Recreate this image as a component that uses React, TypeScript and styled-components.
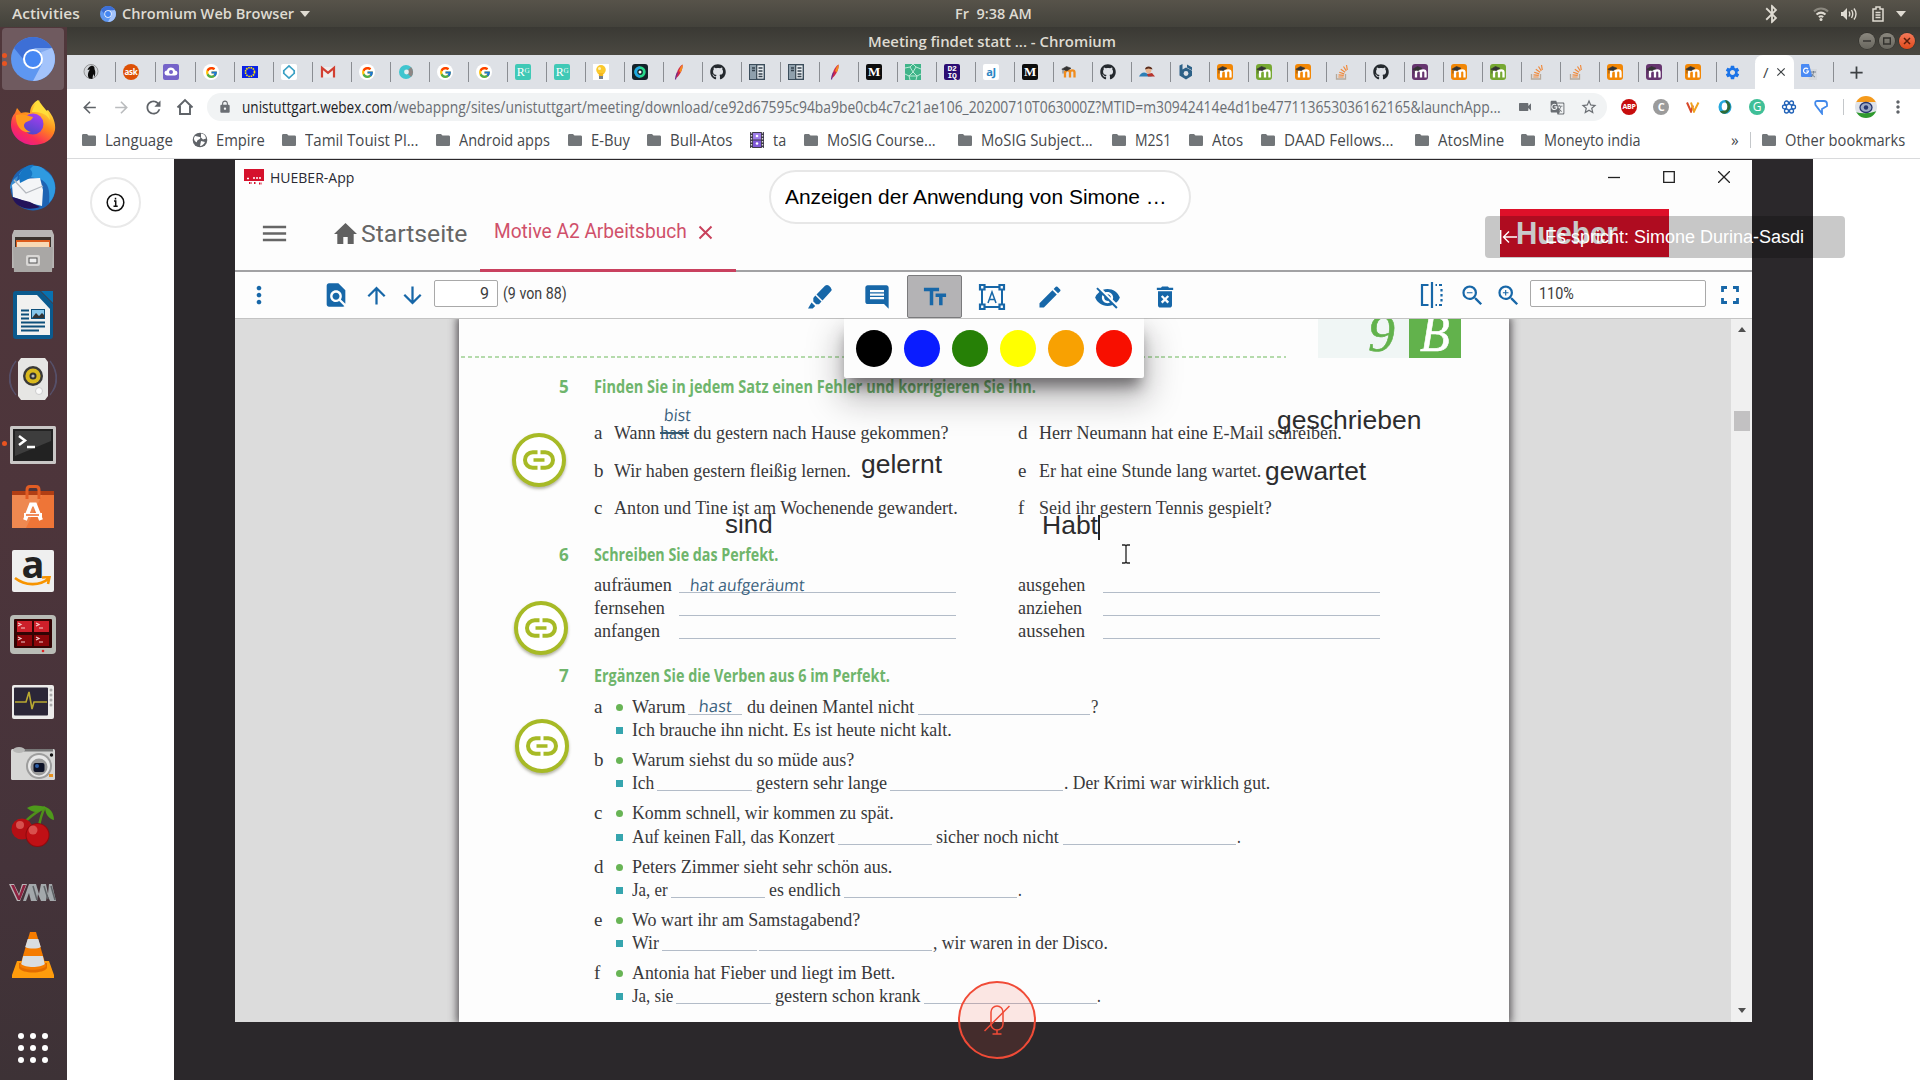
import React, { useLayoutEffect, useRef, useState } from "react";
import styled, { createGlobalStyle } from "styled-components";
import {
  MdMoreVert, MdFindInPage, MdArrowUpward, MdArrowDownward, MdComment, MdTextFields, MdEdit,
  MdVisibilityOff, MdDeleteForever, MdZoomIn, MdZoomOut, MdMenu, MdClose, MdLock, MdVideocam,
  MdStarBorder, MdArrowBack, MdArrowForward, MdRefresh, MdBluetooth, MdSettings, MdAdd, MdGTranslate,
} from "react-icons/md";
import { FaGithub } from "react-icons/fa";
import { FcGoogle } from "react-icons/fc";

const UI = `"Open Sans", "Noto Sans", sans-serif`;
const SERIF = `"Liberation Serif", serif`;
const SANS = `"Liberation Sans", Arial, sans-serif`;
const BLUE = "#1767a8";

const Global = createGlobalStyle`
  * { box-sizing: border-box; }
  body { margin: 0; background: #fff; overflow: hidden; }
  svg { display: block; flex: none; }
`;

/* ---------- text that condenses or widens to a given width ---------- */

const FitBox = styled.span<{ $w: number }>`
  display: inline-block;
  flex: none;
  width: ${(p) => p.$w}px;
  white-space: pre;
`;
const FitInner = styled.span`
  display: inline-block;
  transform-origin: 0 50%;
`;

function Fit({ w, children }: { w: number; children: React.ReactNode }) {
  const ref = useRef<HTMLSpanElement>(null);
  const [scale, setScale] = useState(1);
  useLayoutEffect(() => {
    if (ref.current) setScale(w / ref.current.offsetWidth);
  }, [w]);
  return (
    <FitBox $w={w}>
      <FitInner ref={ref} style={{ transform: `scaleX(${scale})` }}>{children}</FitInner>
    </FitBox>
  );
}

/* ---------- desktop shell ---------- */

const Desktop = styled.div`
  width: 1920px;
  height: 1080px;
  display: flex;
  flex-direction: column;
  overflow: hidden;
  font-family: ${UI};
`;
const TopBar = styled.header`
  height: 27px;
  flex: none;
  display: grid;
  grid-template-columns: 955px 1fr 170px;
  align-items: center;
  background: linear-gradient(#57534a, #43423b);
  color: #dfdbd2;
  font-size: 15px;
  font-weight: 600;
  line-height: 25px;
`;
const TopLeft = styled.div`
  display: flex;
  align-items: center;
  padding-left: 12px;
`;
const AppMenu = styled.div`
  display: flex;
  align-items: center;
  gap: 6px;
  margin-left: 20px;
`;
const TopRight = styled.div`
  display: flex;
  align-items: center;
  padding-left: 11px;
`;
const Tray = styled.div<{ $l?: number }>`
  margin-left: ${(p) => p.$l ?? 0}px;
`;
const Caret = styled.i`
  border: 5px solid transparent;
  border-top: 6px solid #dfdbd2;
  border-bottom: 0;
`;
const Body = styled.div`
  flex: 1;
  display: flex;
  min-height: 0;
`;
const Dock = styled.nav`
  width: 67px;
  flex: none;
  display: flex;
  flex-direction: column;
  background: linear-gradient(#50373b 0%, #4d353b 45%, #45333a 80%, #3d3236 100%);
`;
const DockItem = styled.div<{ $active?: boolean; $drop?: number }>`
  height: 62px;
  width: 62px;
  margin: 1px 2px;
  padding-top: ${(p) => (p.$drop ?? 0) * 2}px;
  border-radius: 4px;
  flex: none;
  display: flex;
  align-items: center;
  justify-content: center;
  position: relative;
  background: ${(p) => (p.$active ? "#6f5a5f" : "transparent")};
`;
const Dots = styled.div`
  position: absolute;
  left: 0;
  top: 0;
  height: 100%;
  display: flex;
  flex-direction: column;
  justify-content: center;
  gap: 3px;
  i { width: 5px; height: 5px; border-radius: 50%; background: #e95420; }
`;
const DockSpacer = styled.div`flex: 1;`;
const AppsGrid = styled.div`
  display: grid;
  grid-template-columns: repeat(3, 6px);
  gap: 6px;
  margin: 0 auto 17px 18px;
  i { width: 6px; height: 6px; border-radius: 50%; background: #fff; }
`;
const Browser = styled.div`
  flex: 1;
  min-width: 0;
  display: flex;
  flex-direction: column;
`;
const TitleBar = styled.div`
  height: 28px;
  flex: none;
  display: flex;
  align-items: center;
  padding-left: 801px;
  background: linear-gradient(#3a3934, #4a4841);
  color: #dfdbd2;
  font-size: 15px;
  font-weight: 600;
  line-height: 26px;
`;
const WinButtons = styled.div`
  margin-left: auto;
  margin-right: 5px;
  display: flex;
  gap: 4px;
`;
const WinButton = styled.span<{ $close?: boolean }>`
  width: 16px;
  height: 16px;
  border-radius: 50%;
  display: flex;
  align-items: center;
  justify-content: center;
  background: ${(p) => (p.$close ? "linear-gradient(#f4795a,#df4a1b)" : "linear-gradient(#8b887f,#68665e)")};
  box-shadow: 0 0 0 0.5px #2c2b27;
`;

/* ---------- browser chrome ---------- */

const TabStrip = styled.div`
  height: 34px;
  flex: none;
  display: flex;
  align-items: center;
  background: #dee1e6;
`;
const Tab = styled.div<{ $w: number; $pad?: number }>`
  width: ${(p) => p.$w}px;
  height: 20px;
  flex: none;
  display: flex;
  align-items: center;
  padding-left: ${(p) => p.$pad ?? 7}px;
  border-right: 1px solid #8a8d92;
`;
const ActiveTab = styled.div`
  width: 39px;
  height: 34px;
  margin-left: -1px;
  margin-right: 1px;
  background: #fff;
  border-radius: 8px 8px 0 0;
  display: flex;
  align-items: center;
  padding-left: 8px;
  gap: 5px;
  font-size: 15px;
  color: #3c4043;
`;
const NewTab = styled.div`
  width: 44px;
  display: flex;
  justify-content: center;
  color: #3c4043;
`;
const Toolbar = styled.div`
  height: 36px;
  flex: none;
  display: flex;
  align-items: center;
  background: #fff;
  color: #5f6368;
  padding: 0 6px;
`;
const NavIcon = styled.div<{ $dim?: boolean }>`
  width: 32px;
  flex: none;
  display: flex;
  justify-content: center;
  color: ${(p) => (p.$dim ? "#babcbe" : "#5f6368")};
`;
const Omnibox = styled.div`
  width: 1400px;
  height: 28px;
  flex: none;
  margin: 0 6px;
  border-radius: 14px;
  background: #f1f3f4;
  display: flex;
  align-items: center;
  padding-left: 10px;
  font-size: 15.5px;
  line-height: 27px;
  color: #6a6e73;
  b { font-weight: 400; color: #202124; }
`;
const OmniIcon = styled.div<{ $w: number; $l?: number }>`
  width: ${(p) => p.$w}px;
  flex: none;
  margin-left: ${(p) => p.$l ?? 0}px;
  display: flex;
  justify-content: center;
`;
const VLine = styled.i<{ $h: number; $r?: number }>`
  width: 1px;
  height: ${(p) => p.$h}px;
  margin-right: ${(p) => p.$r ?? 0}px;
  background: #c4c7ca;
`;
const Bookmarks = styled.div`
  height: 34px;
  flex: none;
  display: flex;
  align-items: center;
  background: #fff;
  border-bottom: 1px solid #d9dadc;
  padding: 0 0 4px 15px;
  font-size: 15.5px;
  line-height: 22px;
  color: #45484c;
`;
const Bookmark = styled.div<{ $w: number; $gap?: number }>`
  width: ${(p) => p.$w}px;
  flex: none;
  display: flex;
  align-items: center;
  gap: ${(p) => p.$gap ?? 9}px;
`;
const More = styled.span`
  flex: none;
  margin-left: 90px;
  width: 19px;
`;

/* ---------- meeting page ---------- */

const Meeting = styled.main`
  flex: 1;
  display: flex;
  background: #fff;
  position: relative;
`;
const Side = styled.div`
  width: 107px;
  flex: none;
  padding: 18px 0 0 23px;
`;
const InfoButton = styled.div`
  width: 51px;
  height: 51px;
  border-radius: 50%;
  border: 2px solid #e9e9e9;
  display: flex;
  align-items: center;
  justify-content: center;
`;
const Stage = styled.div`
  width: 1639px;
  background: #2b282b;
  padding: 1px 61px 0;
`;
const Share = styled.div`
  width: 1517px;
  height: 862px;
  background: #fdfdfd;
  display: flex;
  flex-direction: column;
  overflow: hidden;
`;
const ShareTitle = styled.div`
  height: 36px;
  flex: none;
  display: flex;
  align-items: center;
  padding: 0 22px 2px 9px;
  font: 15px/34px ${UI};
  color: #2a2a33;
  > svg { margin-right: 6px; }
`;
const Controls = styled.div`
  margin-left: auto;
  display: flex;
  gap: 43px;
`;
const AppHeader = styled.div`
  height: 76px;
  flex: none;
  display: flex;
  border-bottom: 2px solid #a2a2a4;
  font-family: Roboto, sans-serif;
  color: #666;
`;
const MenuCell = styled.div`
  width: 93px;
  padding: 22px 0 0 24px;
`;
const HomeTab = styled.div`
  width: 152px;
  padding: 20px 0 0 6px;
  display: flex;
  align-items: flex-start;
  gap: 4px;
  font-size: 24.5px;
  line-height: 35px;
  svg { margin-top: 7px; }
`;
const BookTab = styled.div`
  width: 256px;
  height: 76px;
  padding: 23px 0 0 14px;
  display: flex;
  gap: 11px;
  border-bottom: 3px solid #c9415f;
  color: #d0506a;
  font-size: 19.5px;
  line-height: 26px;
  svg { margin-top: 6px; }
`;
const Logo = styled.div`
  width: 169px;
  height: 48px;
  margin: 13px 0 0 764px;
  padding-left: 16px;
  background: #de1029;
  color: #fff;
  font: bold 31px/50px ${SANS};
`;
const Tools = styled.div`
  height: 47px;
  flex: none;
  display: flex;
  align-items: center;
  border-bottom: 1px solid #c3c3c3;
  color: ${BLUE};
  position: relative;
  z-index: 2;
  background: #fdfdfd;
  font: 16px/27px Roboto, sans-serif;
`;
const Tool = styled.div<{ $w: number; $l?: number; $on?: boolean; $edit?: boolean }>`
  width: ${(p) => p.$w}px;
  margin-left: ${(p) => p.$l ?? 0}px;
  margin-top: ${(p) => (p.$edit ? 2 : 0)}px;
  padding-top: ${(p) => (p.$edit ? 2 : 0)}px;
  height: 43px;
  flex: none;
  display: flex;
  align-items: center;
  justify-content: center;
  border: ${(p) => (p.$on ? "1px solid #7a7a7c" : "0")};
  border-radius: 2px;
  background: ${(p) => (p.$on ? "#b4b3b5" : "transparent")};
`;
const Field = styled.div<{ $w: number; $l?: number; $right?: boolean }>`
  width: ${(p) => p.$w}px;
  height: 27px;
  margin-left: ${(p) => p.$l ?? 0}px;
  margin-bottom: 4px;
  flex: none;
  border: 1px solid #a9a9a9;
  border-radius: 2px;
  background: #fff;
  color: #3c3c3c;
  padding: 0 8px;
  line-height: 25px;
  text-align: ${(p) => (p.$right ? "right" : "left")};
`;
const PageCount = styled.div`
  width: 292px;
  flex: none;
  margin-left: 5px;
  padding-bottom: 4px;
  color: #3c3c3c;
`;
const Palette = styled.div`
  position: absolute;
  left: 609px;
  top: 46px;
  width: 300px;
  height: 60px;
  padding: 11px 12px 0;
  display: flex;
  gap: 12px;
  background: #fdfdfd;
  border-top: 1px solid #c3c3c3;
  border-radius: 0 0 2px 2px;
  clip-path: inset(0 -60px -60px -60px);
  box-shadow: 0 12px 14px -4px rgba(20, 16, 20, 0.5), 0 18px 34px 4px rgba(20, 16, 20, 0.26);
`;
const Swatch = styled.i<{ $c: string }>`
  width: 36px;
  height: 37px;
  border-radius: 50%;
  background: ${(p) => p.$c};
`;
const Viewer = styled.div`
  flex: 1;
  min-height: 0;
  display: flex;
  background: #dcdcdc;
  padding-left: 224px;
`;
const Sheet = styled.article`
  width: 1050px;
  height: 703px;
  flex: none;
  position: relative;
  background: #fdfdfd;
  box-shadow: 0 0 8px 2px rgba(40, 36, 40, 0.75);
  clip-path: inset(0 -12px 0 -12px);
  font: 19px/23px ${SERIF};
  color: #38383a;
`;
const Scroll = styled.div`
  width: 21px;
  margin-left: auto;
  background: #f0f0f0;
  display: flex;
  flex-direction: column;
  align-items: center;
  padding: 4px 0 5px;
`;
const Thumb = styled.i`
  width: 16px;
  height: 20px;
  margin-top: 79px;
  background: #c2c1c2;
`;
const Arrow = styled.i<{ $down?: boolean }>`
  border: 4px solid transparent;
  ${(p) => (p.$down ? "border-top: 5px solid #505050; margin-top: auto;" : "border-bottom: 5px solid #505050;")}
`;
const Banner = styled.div`
  height: 38px;
  display: flex;
  padding-left: 2px;
`;
const DashRule = styled.div`
  width: 825px;
  height: 39px;
  background: repeating-linear-gradient(90deg, #b5dbac 0 4px, transparent 4px 6.8px) 0 100% / 100% 2px no-repeat;
`;
const Chapter = styled.div<{ $fill: string; $ink: string; $w: number; $pad: number; $ml?: number }>`
  width: ${(p) => p.$w}px;
  margin-left: ${(p) => p.$ml ?? 0}px;
  padding-left: ${(p) => p.$pad}px;
  height: 39px;
  overflow: hidden;
  background: ${(p) => p.$fill};
  color: ${(p) => p.$ink};
  font: italic 52px/29px ${SERIF};
  -webkit-text-stroke: 0.6px ${(p) => p.$ink};
`;
const Heading = styled.h2<{ $mt: number }>`
  margin: ${(p) => p.$mt}px 0 0;
  height: 24px;
  padding-left: 100px;
  display: flex;
  font: bold 17px/26px ${UI};
  color: #6fb56c;
`;
const Num = styled.span`width: 35px;`;
const Row = styled.div<{ $mt?: number }>`
  height: 23px;
  margin-top: ${(p) => p.$mt ?? 0}px;
  padding-left: 135px;
  display: flex;
  align-items: flex-start;
`;
const Mark = styled.span<{ $w: number }>`
  width: ${(p) => p.$w}px;
  flex: none;
`;
const Half = styled.div`
  width: 424px;
  flex: none;
  display: flex;
`;
const Struck = styled.s`
  color: #33586f;
  text-decoration-thickness: 2px;
`;
const Blank = styled.span<{ $w: number; $l?: number; $r?: number }>`
  width: ${(p) => p.$w}px;
  flex: none;
  margin: 0 ${(p) => p.$r ?? 4}px 0 ${(p) => p.$l ?? 3.5}px;
  height: 20px;
  display: flex;
  justify-content: center;
  border-bottom: 1px solid #b3bcc8;
`;
const Hand = styled.span`
  display: inline-block;
  font: 16.5px/21px ${UI};
  color: #3b627e;
  transform: skewX(-5deg);
`;
const Bullet = styled.i<{ $sq?: boolean }>`
  width: 7px;
  height: 7px;
  margin: 9px 9px 0 0;
  flex: none;
  border-radius: ${(p) => (p.$sq ? 0 : "50%")};
  background: ${(p) => (p.$sq ? "#36a5ae" : "#68b455")};
`;
const Note = styled.div<{ $x: number; $y: number }>`
  position: absolute;
  left: ${(p) => p.$x}px;
  top: ${(p) => p.$y}px;
  font: 26.5px/30px ${SANS};
  color: #2c2c2e;
`;
const Pinned = styled.div<{ $x: number; $y: number }>`
  position: absolute;
  left: ${(p) => p.$x}px;
  top: ${(p) => p.$y}px;
`;
const LinkBadge = styled(Pinned)`
  width: 54px;
  height: 54px;
  border: 4px solid #a7ba26;
  border-radius: 50%;
  background: #fff;
  display: flex;
  align-items: center;
  justify-content: center;
  box-shadow: 0 2px 3px rgba(90, 90, 60, 0.45);
`;
const TextCaret = styled(Pinned)`
  width: 1.5px;
  height: 25px;
  background: #222;
`;
const Pill = styled.div`
  position: absolute;
  left: 702px;
  top: 11px;
  width: 422px;
  height: 54px;
  border: 2px solid #e7e7e7;
  border-radius: 27px;
  background: #fff;
  padding-left: 14px;
  font: 20px/50px ${SANS};
  color: #000;
`;
const Speaker = styled.div`
  position: absolute;
  left: 1418px;
  top: 57px;
  width: 360px;
  height: 42px;
  border-radius: 4px;
  background: rgba(0, 0, 0, 0.21);
  color: #fff;
  display: flex;
  align-items: center;
  gap: 28px;
  padding-left: 15px;
  font: 18px/42px ${SANS};
`;
const MicButton = styled.div`
  position: absolute;
  left: 891px;
  top: 822px;
  width: 78px;
  height: 78px;
  border-radius: 50%;
  border: 2px solid #f04b37;
  background: rgba(240, 75, 55, 0.13);
  display: flex;
  align-items: center;
  justify-content: center;
`;

/* ---------- favicons ---------- */

const FavBox = styled.span<{ $bg: string; $c?: string; $f?: string; $round?: boolean }>`
  width: 16px;
  height: 16px;
  flex: none;
  display: flex;
  align-items: center;
  justify-content: center;
  overflow: hidden;
  border-radius: ${(p) => (p.$round ? "50%" : "2px")};
  background: ${(p) => p.$bg};
  color: ${(p) => p.$c ?? "#fff"};
  font: ${(p) => p.$f ?? `bold 9px/16px ${UI}`};
  letter-spacing: -0.3px;
`;
const WhiteDisc = styled.span`
  width: 16px;
  height: 16px;
  border-radius: 50%;
  background: #fff;
  display: flex;
  align-items: center;
  justify-content: center;
`;

const Moodle = ({ c }: { c: string }) => (
  <svg width="16" height="16" viewBox="0 0 16 16">
    {c !== "none" && <rect width="16" height="16" rx="3" fill={c} />}
    <path d="M4 13.500V7M4.500 8.500c0-2.800 4.500-2.800 4.500 0v5M9 8.500c0-2.800 4.500-2.800 4.500 0v5" fill="none" stroke={c === "none" ? "#f08c1e" : "#fff"} strokeWidth="2.300" />
    <path d="M.8 5.200 5.500 2.500l4.500 1.700-4 2.600zM2 5.500v4" fill="#333" stroke="#333" strokeWidth=".6" />
  </svg>
);
const Stack = () => (
  <svg width="16" height="16" viewBox="0 0 16 16" fill="none">
    <path d="M2.500 10v5h9v-5" stroke="#b5a99c" strokeWidth="1.300" />
    <path d="M4.300 13h5.400M4.500 10.800l5.300.6M5.200 8.200l5 1.700M6.800 5.200l4.300 3.100M9.500 2.500l2.800 4.300M12.500 1l.8 5" stroke="#f08a3c" strokeWidth="1.200" />
  </svg>
);
const Feather = () => (
  <svg width="16" height="16" viewBox="0 0 16 16">
    <path d="M5 14C5 9 7.500 3 11.500.5 12.200 4 9.500 10 6.500 13z" fill="#d0284a" />
    <path d="M8 7C9 4 10 2 11.500.5 12.200 3 11 6 9.800 8.500z" fill="#f58a1f" />
    <path d="M4.500 15.500c.3-3 1-5 2-7" stroke="#6d2a86" fill="none" strokeWidth="1.200" />
  </svg>
);
const BookIcon = () => (
  <svg width="16" height="16" viewBox="0 0 16 16">
    <rect x=".7" y=".7" width="14.600" height="14.600" fill="#e8edf0" stroke="#3c4e5c" strokeWidth="1.400" />
    <path d="M1 1h6.500v14H1z" fill="#8fa0ac" />
    <path d="M3 4h3M3 6.500h3M9.500 4h4M9.500 7h4M9.500 10h4M9.500 12.500h4" stroke="#34424d" strokeWidth="1.500" />
    <path d="M7.700 1v14" stroke="#34424d" strokeWidth="1.200" />
  </svg>
);
const G = () => <WhiteDisc><FcGoogle size={13} /></WhiteDisc>;
const Hub = () => <FaGithub size={16} color="#24292e" />;
const RG = () => <FavBox $bg="#40c9b6" $f={`12px/16px ${SERIF}`}>Rᴳ</FavBox>;
const M = () => <FavBox $bg="#0d0d0d" $f={`bold 13px/16px ${SERIF}`}>M</FavBox>;

const Penguin = () => (
  <svg width="16" height="16" viewBox="0 0 16 16">
    <circle cx="8" cy="7.500" r="7" fill="#d3d6da" stroke="#777" strokeWidth=".7" />
    <path d="M8 2c2-1 4 1 3.500 3C13 8 12 11 11.500 13l-1.300-3-.8 5-3.200-.6C4 12 5 8 7 5.500L4.500 6C5 4 6.500 2.500 8 2z" fill="#0b0b0b" />
  </svg>
);
const CloudFav = () => (
  <svg width="16" height="16" viewBox="0 0 16 16">
    <rect width="16" height="16" rx="2" fill="#7563c9" />
    <path d="M4 11.500a2.500 2.500 0 0 1 0-5C4.500 2.500 11 2.500 12 6.500a2.500 2.500 0 0 1 0 5z" fill="#fff" />
    <circle cx="8" cy="8" r="2" fill="#7563c9" />
  </svg>
);
const EU = () => (
  <svg width="16" height="16" viewBox="0 0 16 16">
    <rect y="2" width="16" height="12" fill="#0a22e6" />
    <circle cx="8" cy="8" r="4.500" fill="none" stroke="#ffe800" strokeWidth="1.700" strokeDasharray="1.500 .86" />
  </svg>
);
const Diamond = () => (
  <svg width="16" height="16" viewBox="0 0 16 16">
    <rect width="16" height="16" rx="2" fill="#fff" />
    <path d="M3 6.500 8 1.800l5 4.700M3 9.500l5 4.700 5-4.700M2.800 6v4M13.200 6v4" fill="none" stroke="#3aa0c4" strokeWidth="1.700" />
  </svg>
);
const Gmail = () => (
  <svg width="16" height="16" viewBox="0 0 16 16">
    <path d="M1 3h14v10.500H1z" fill="#eee" />
    <path d="M2 13.500V3.800l6 5 6-5v9.700" fill="none" stroke="#d23f31" strokeWidth="2.200" />
  </svg>
);
const CDisc = () => (
  <svg width="16" height="16" viewBox="0 0 16 16">
    <circle cx="8" cy="8" r="7" fill="#3fc5cf" />
    <path d="M8 8 13 3a7 7 0 0 1 0 10z" fill="#8d8684" />
    <circle cx="8.500" cy="8" r="2.400" fill="#e4eef0" />
  </svg>
);
const Bulb = () => (
  <svg width="16" height="16" viewBox="0 0 16 16">
    <rect width="16" height="16" fill="#fff" />
    <circle cx="8" cy="5.800" r="4.800" fill="#fbc92c" />
    <path d="M5.800 9h4.400v3H5.800z" fill="#f4b61e" />
    <path d="M6 12h4v3H6z" fill="#77808a" />
    <circle cx="6.500" cy="4.500" r="1.500" fill="#fff3b8" />
  </svg>
);
const Ring = () => (
  <svg width="16" height="16" viewBox="0 0 16 16">
    <rect width="16" height="16" rx="3" fill="#14212a" />
    <circle cx="8" cy="8" r="4.300" fill="none" stroke="#27d98b" strokeWidth="2.800" />
    <path d="M8 3.700a4.300 4.300 0 0 0 0 8.600" fill="none" stroke="#22a7e6" strokeWidth="2.800" />
    <circle cx="8" cy="8" r="1.500" fill="#fff" />
  </svg>
);
const Mesh = () => (
  <svg width="16" height="16" viewBox="0 0 16 16">
    <rect width="16" height="16" fill="#3fb489" />
    <path d="M0 4l5-1 3 5-4 4-4-2M5 3l3-3 3 3 5 2M11 3 8 8l4 4 4-2M4 12l1 4M12 12l-1 4M4 12h8" fill="none" stroke="#c8efdf" strokeWidth=".9" />
  </svg>
);
const Guy = () => (
  <svg width="16" height="16" viewBox="0 0 16 16">
    <path d="M0 12.500c2-4 5-5 8-3l5 3z" fill="#2d7fb5" />
    <circle cx="9.500" cy="6.500" r="2.800" fill="#e9b48e" />
    <path d="M6 5.500c0-4 7-4 7.500 0l-4-1z" fill="#5b2c1b" />
    <path d="M8 10l5-1 3 3.500H9z" fill="#b8342c" />
  </svg>
);
const HexB = () => (
  <svg width="16" height="16" viewBox="0 0 16 16">
    <path d="M1.500 1.500 4.500 0v5.500L8 3.500l6 3.300v5L8 15.500l-6.500-4z" fill="#2d6187" />
    <circle cx="8" cy="9.500" r="2.400" fill="#dee1e6" />
    <path d="M9 .5l5 2.800v3L9 3.500z" fill="#2d6187" />
  </svg>
);
const Translate = () => (
  <svg width="16" height="16" viewBox="0 0 16 16">
    <path d="M6 5h10v11H8z" fill="#d5d8dc" />
    <path d="M1 0h7l3.500 13H1q-1 0-1-1V1q0-1 1-1z" fill="#4a8af4" />
    <path d="M7 5.200A2.500 2.500 0 1 0 7.500 7H5.200" fill="none" stroke="#fff" strokeWidth="1.200" />
    <path d="M10 8h5M12.500 7v1c0 2-1 3.500-2.500 5M11 10c.5 1.300 1.500 2.300 3 3" fill="none" stroke="#6d7a8a" strokeWidth=".9" />
  </svg>
);

const tabs: React.ReactNode[] = [
  <Penguin />, <FavBox $bg="#dd5005" $round $f={`bold 8px/16px ${UI}`}>ask</FavBox>, <CloudFav />, <G />, <EU />,
  <Diamond />, <Gmail />, <G />, <CDisc />, <G />, <G />, <RG />, <RG />, <Bulb />, <Ring />,
  <Feather />, <Hub />, <BookIcon />, <BookIcon />, <Feather />, <M />, <Mesh />,
  <FavBox $bg="#2c0d73" $f={`bold 8px/7.5px "Liberation Mono", monospace`}>D2<br />IQ</FavBox>,
  <FavBox $bg="#fff" $c="#2a86c4" $f={`bold 11px/14px ${UI}`}>aJ</FavBox>, <M />, <Moodle c="none" />, <Hub />,
  <Guy />, <HexB />, <Moodle c="#f28705" />, <Moodle c="#76a832" />, <Moodle c="#f28705" />, <Stack />, <Hub />,
  <Moodle c="#66356f" />, <Moodle c="#f28705" />, <Moodle c="#76a832" />, <Stack />, <Stack />,
  <Moodle c="#f28705" />, <Moodle c="#66356f" />, <Moodle c="#f28705" />, <MdSettings size={17} color="#1a73e8" />,
];

/* ---------- dock icons ---------- */

const Chromium = ({ s }: { s: number }) => (
  <svg width={s} height={s} viewBox="0 0 44 44">
    <circle cx="22" cy="22" r="22" fill="#5e97f1" />
    <path d="M3 11A22 22 0 0 1 41 11L22 12 12 22z" fill="#3d6fd6" />
    <path d="M41 11A22 22 0 0 1 22 44L31 27 30 11z" fill="#a3c3fb" />
    <path d="M22 11h19l-10 4z" fill="#82a9ee" />
    <circle cx="22" cy="22" r="10" fill="#fff" />
    <circle cx="22" cy="22" r="8" fill="#4587f3" />
  </svg>
);
const Firefox = () => (
  <svg width="46" height="48" viewBox="0 0 46 48">
    <defs>
      <linearGradient id="fx" x1=".8" y1="0" x2=".2" y2="1"><stop offset=".1" stopColor="#ffe83f" /><stop offset=".45" stopColor="#ff8a1c" /><stop offset=".75" stopColor="#fb2e57" /><stop offset="1" stopColor="#e3159a" /></linearGradient>
      <linearGradient id="fxg" x1=".7" y1="0" x2=".3" y2="1"><stop offset="0" stopColor="#a73df0" /><stop offset="1" stopColor="#4a48c8" /></linearGradient>
    </defs>
    <path d="M7 9l4 5c3-1 6-1 9 0 0-6 4-11 8-13 1 5 5 7 8 11l2-1c5 6 8 13 7 20-2 10-11 15-22 15S1 37 1 26c0-5 1-9 4-12z" fill="url(#fx)" />
    <circle cx="23" cy="25" r="10.500" fill="url(#fxg)" />
    <path d="M6 16c7-2 11 1 17 2-1 4-6 4-8 6-3 3 1 8 6 9-9 2-16-6-15-17z" fill="#ff9a1f" />
    <path d="M22 13c2-7 5-10 7-12 1 5 10 10 11 20-4-7-10-8-18-8z" fill="#ffde3a" />
  </svg>
);
const Thunderbird = () => (
  <svg width="48" height="48" viewBox="0 0 48 48">
    <circle cx="24" cy="25" r="22.500" fill="#1d63b3" />
    <path d="M10 12C14 2 30-1 37 8c10 6 13 22 3 32 1-12 0-20-9-24z" fill="#2f9ae0" />
    <path d="M1 26c0-6 3-10 8-13l-2 8z" fill="#3c8fd2" />
    <path d="M3 22l8-6 20-1 3 12-1 16-12-3-17-6z" fill="#f4f5f7" />
    <path d="M5 17l12 13 17-7" fill="none" stroke="#b4b8be" strokeWidth="1.200" />
    <path d="M3 34c8 2 13 4 18 5l10 5c-12 4-24 1-28-10z" fill="#23135a" />
    <path d="M10 14C13 5 19 1 25 2l-4 4c3 3 3 6 0 9l-10 5z" fill="#1676c4" />
  </svg>
);
const Files = () => (
  <svg width="42" height="44" viewBox="0 0 42 44">
    <path d="M2 1h38l2 5v33H0V6z" fill="#b8b6b4" />
    <path d="M3 8h36v11H3z" fill="#3a332e" />
    <path d="M4 11h34v8H4z" fill="#dc5c1c" /><path d="M5 13h32v5H5z" fill="#f8d9b4" />
    <path d="M1 18h40l-1 25H2z" fill="#a9a7a5" />
    <rect x="14" y="26" width="14" height="11" rx="2" fill="#d9d7d5" />
    <rect x="17" y="29" width="8" height="5" fill="#eee" stroke="#555" />
  </svg>
);
const Writer = () => (
  <svg width="40" height="48" viewBox="0 0 40 48">
    <path d="M3 0h24l13 13v32a3 3 0 0 1-3 3H3a3 3 0 0 1-3-3V3a3 3 0 0 1 3-3z" fill="#0b5a8e" />
    <path d="M28 0h12v12z" fill="#0971b0" />
    <path d="M4 4h20l13 14v26H4z" fill="#f1f1f0" />
    <path d="M8 19.500h8M8 23.500h8M8 27.500h8M8 31.500h24M8 35.500h24M8 39.500h18" stroke="#0d4f7a" strokeWidth="2" />
    <path d="M18 18h14v10H18z" fill="#0d4f7a" /><path d="M19 19h12v8H19z" fill="#86c6ea" /><path d="M19 27l4-5 3 3 3-3 2 2v3z" fill="#333" />
  </svg>
);
const Rhythm = () => (
  <svg width="48" height="44" viewBox="0 0 48 44">
    <path d="M7 4C-1 14-1 28 7 38M41 4c8 10 8 24 0 34M4 8C-1 18-1 26 4 34M44 8c5 10 5 18 0 26" fill="none" stroke="#5a5a7a" strokeWidth="1.300" opacity=".75" />
    <path d="M12 1h24l3 4v34l-3 4H12l-3-4V5z" fill="#e6e6e4" />
    <circle cx="24" cy="19" r="10" fill="#3a3a38" /><circle cx="24" cy="19" r="7.600" fill="#d9b91e" />
    <circle cx="24" cy="19" r="3.500" fill="#333" /><circle cx="24" cy="19" r="1.600" fill="#bbb" />
    <circle cx="30" cy="34" r="3.500" fill="#fafafa" stroke="#ccc" />
  </svg>
);
const Terminal = () => (
  <svg width="46" height="38" viewBox="0 0 46 38">
    <rect width="46" height="38" rx="1.500" fill="#c9c7c6" /><rect x="3" y="3" width="40" height="32" fill="#222" />
    <path d="M5 5h36v10L5 30z" fill="#3d3d3d" /><path d="M9 10l6 4.500L9 19" fill="none" stroke="#fff" strokeWidth="2.500" /><path d="M17 21h8" stroke="#fff" strokeWidth="2.500" />
  </svg>
);
const Software = () => (
  <svg width="42" height="44" viewBox="0 0 42 44">
    <path d="M0 6h42v8H0z" fill="#b03e14" /><path d="M0 10h42v33H0z" fill="#ee7537" /><path d="M0 10h30L14 43H0z" fill="#ee8850" />
    <path d="M15 14V5q0-3.500 3-3.500h6q3 0 3 3.500v9" fill="none" stroke="#e25d24" strokeWidth="3" />
    <path d="M13 35 19 19.500h4L29 35M12 30h18" fill="none" stroke="#fff" strokeWidth="4" /><path d="M14 30h13" stroke="#ee6a2a" strokeWidth="1.500" />
  </svg>
);
const AmazonTile = styled.div`
  width: 42px;
  height: 42px;
  border-radius: 2px;
  background: #efefef;
  display: flex;
  flex-direction: column;
  align-items: center;
  font: bold 38px/26px ${UI};
  color: #222;
`;
const Amazon = () => (
  <AmazonTile>
    a
    <svg width="38" height="11" viewBox="0 0 38 11"><path d="M1 2c10 8 25 8 33 1M28 1.500l7.500-.5L34 8" fill="none" stroke="#f79400" strokeWidth="2.600" /></svg>
  </AmazonTile>
);
const Terminator = () => (
  <svg width="46" height="40" viewBox="0 0 46 40">
    <rect width="46" height="39" rx="4" fill="#b9bcb6" /><rect x="4" y="4" width="38" height="29" rx="1" fill="#320404" />
    <path d="M7 6h15v11H7zM24 6h15v11H24z" fill="#cd1f2a" /><path d="M7 20h15v11H7zM24 20h15v11H24z" fill="#8c0509" />
    <path d="M8 8l3 1.500L8 11M26 8l3 1.500-3 1.500M8 22l3 1.500L8 25M26 22l3 1.500-3 1.500M11 13h4M29 13h4M11 27h4M29 27h4" fill="none" stroke="#f3cccc" strokeWidth="1.200" />
    <circle cx="33" cy="36" r="1.300" fill="#d22" />
  </svg>
);
const Monitor = () => (
  <svg width="42" height="34" viewBox="0 0 42 34">
    <rect width="42" height="34" rx="2" fill="#ecebea" /><rect x="2" y="2.500" width="34" height="28" rx="1" fill="#2b2637" />
    <path d="M3 17h11l3-10 3 17 2-7h13" fill="none" stroke="#b9a932" strokeWidth="1.600" />
    <g fill="#aaa"><circle cx="39" cy="5" r="1.500" /><circle cx="39" cy="10" r="1.500" /><circle cx="39" cy="15" r="1.500" /><circle cx="39" cy="20" r="1.500" /></g>
  </svg>
);
const Camera = () => (
  <svg width="44" height="34" viewBox="0 0 44 34">
    <rect y="2" width="44" height="31" rx="1.500" fill="#d6d6d5" /><path d="M13 2h29v2.500H13z" fill="#777" /><ellipse cx="8" cy="3" rx="6" ry="3" fill="#b7b7b6" />
    <circle cx="28" cy="19" r="13" fill="#9d9d9d" /><circle cx="28" cy="19" r="11" fill="#e8e8e8" /><circle cx="28" cy="20" r="8.500" fill="#999" />
    <rect x="22.500" y="16" width="11" height="9" rx="2" fill="#0d1226" /><circle cx="26" cy="19" r="2" fill="#2c5ea6" />
    <circle cx="40.500" cy="8" r="1.700" fill="#111" /><path d="M38 27h4v3h-4z" fill="#e8901e" />
  </svg>
);
const Cherries = () => (
  <svg width="44" height="44" viewBox="0 0 44 44">
    <path d="M14 17C20 10 26 7 34 2M28 22c1-8 3-14 6-20" fill="none" stroke="#4f8f1a" strokeWidth="2.500" />
    <path d="M16 3c7-4 13-2 19-1-6 6-12 7-19 1zM34 2c5 1 9 6 9 13-5-1-9-6-9-13z" fill="#4e9a1b" />
    <circle cx="11" cy="24" r="10.500" fill="#b50f14" /><circle cx="26.500" cy="30" r="12" fill="#8f0a0e" /><circle cx="26.500" cy="30" r="11" fill="#c01015" />
    <circle cx="9" cy="20" r="4" fill="#d6514e" /><circle cx="22" cy="25" r="4.500" fill="#d9504d" />
  </svg>
);
const VMM = () => (
  <svg width="48" height="18" viewBox="0 0 48 18">
    <path d="M0 0h5l5 10 3-10h5l-7 17H8z" fill="#b9b4b6" /><path d="M2 1h3l5 11 4-11h3l-6 15H9z" fill="#8d2240" />
    <path d="M14 17 20 0h7l3 10 2-10h5l2 10 1-10h3l4 17h-6l-3-7-1 7h-5l-3-7-1 7h-6l-2-8-3 8z" fill="#a3a8ab" />
    <path d="M24 2l4 14M35 2l4 13M42 2l4 14" stroke="#5d6265" strokeWidth="1.500" />
  </svg>
);
const VLC = () => (
  <svg width="42" height="46" viewBox="0 0 42 46">
    <path d="M5 29h32l5 14v3H0v-3z" fill="#ff9c0c" /><path d="M7 36c3 6 25 6 28 0v-5H7z" fill="#e26c00" />
    <path d="M18 0h6l10 34c-4 5-22 5-26 0z" fill="#f57c00" />
    <path d="M15.700 7h10.600l2.500 8c-3 2-12 2-15.600 0zM11.200 24h19.600l2 8c-4 4-20 4-23.600 0z" fill="#d9dde0" />
  </svg>
);

const dock: { icon: React.ReactNode; dots?: number; drop?: number }[] = [
  { icon: <Chromium s={44} />, dots: 2 }, { icon: <Firefox /> }, { icon: <Thunderbird /> },
  { icon: <Files /> }, { icon: <Writer /> }, { icon: <Rhythm /> }, { icon: <Terminal />, dots: 1, drop: 2 },
  { icon: <Software /> }, { icon: <Amazon /> }, { icon: <Terminator /> }, { icon: <Monitor />, drop: 3 },
  { icon: <Camera />, drop: 1 }, { icon: <Cherries /> }, { icon: <VMM />, drop: 2 }, { icon: <VLC /> },
];

/* ---------- small glyphs ---------- */

const Folder = () => (
  <svg width="14" height="12" viewBox="0 0 14 12"><path d="M0 1.500C0 .5.500 0 1.500 0H5l1.500 1.500h6c1 0 1.500.5 1.500 1.500v7.500c0 1-.5 1.500-1.500 1.500h-11C.5 12 0 11.500 0 10.500z" fill="#727679" /></svg>
);
const Globe = () => (
  <svg width="16" height="16" viewBox="0 0 16 16"><circle cx="8" cy="8" r="7.300" fill="#5f6368" /><path d="M3 4c2 0 3 1 5 1 1 1 0 2-2 3s0 3-2 2-2-3-2-4zM9 1.500c3 0 5 3 5 5l-3 1-2-2zM9 9l4 1c-1 2-3 4-5 4z" fill="#fff" /></svg>
);
const Film = () => (
  <svg width="16" height="16" viewBox="0 0 16 16"><rect x="1" width="14" height="16" fill="#3f3a4a" /><rect x="4" y="1" width="8" height="6.500" fill="#9d7be8" /><rect x="4" y="8.500" width="8" height="6.500" fill="#7f58d8" /><path d="M2.500 0v16M13.500 0v16" stroke="#ddd" strokeWidth="1.300" strokeDasharray="1.500 1.500" /><circle cx="8" cy="4" r="1.300" fill="#fff" /><circle cx="8" cy="11.500" r="1.300" fill="#fff" /></svg>
);
const marks = [
  { t: "Language", w: 68, p: 110 }, { t: "Empire", w: 48.5, p: 90, i: <Globe /> }, { t: "Tamil Touist Pl...", w: 113.5, p: 154 },
  { t: "Android apps", w: 91, p: 132 }, { t: "E-Buy", w: 39, p: 79 }, { t: "Bull-Atos", w: 62, p: 102 }, { t: "ta", w: 13, p: 55, i: <Film /> },
  { t: "MoSIG Course...", w: 109, p: 154 }, { t: "MoSIG Subject...", w: 112, p: 154 }, { t: "M2S1", w: 36, p: 77 }, { t: "Atos", w: 31, p: 72 },
  { t: "DAAD Fellows...", w: 110, p: 154 }, { t: "AtosMine", w: 66, p: 106 }, { t: "Moneyto india", w: 97, p: 120 },
];
const HomeOutline = () => (
  <svg width="18" height="18" viewBox="0 0 18 18"><path d="M1.500 9.500 9 2l7.500 7.500M4 8v8h10V8" fill="none" stroke="#5f6368" strokeWidth="1.900" /></svg>
);
const Shamrock = () => (
  <svg width="16" height="16" viewBox="0 0 16 16" fill="none" stroke="#2062b8" strokeWidth="1.300"><circle cx="5.500" cy="4" r="2" /><circle cx="10.500" cy="4" r="2" /><circle cx="3.500" cy="8" r="2" /><circle cx="12.500" cy="8" r="2" /><circle cx="5.500" cy="12" r="2" /><circle cx="10.500" cy="12" r="2" /></svg>
);
const WebexRing = () => (
  <svg width="16" height="16" viewBox="0 0 16 16"><ellipse cx="8" cy="8" rx="6.500" ry="7" fill="#25a7dd" /><path d="M8 1c5 1 8 7 3 12-3 3-7 2-8-1 5 1 8-5 5-11z" fill="#2d6b38" /><ellipse cx="7.500" cy="7.500" rx="2.800" ry="4" fill="#fff" /></svg>
);
const Avatar = () => (
  <svg width="22" height="22" viewBox="0 0 22 22"><clipPath id="av"><circle cx="11" cy="11" r="11" /></clipPath><g clipPath="url(#av)"><path d="M0 0h22v7H0z" fill="#f59a1b" /><path d="M0 6h22v11H0z" fill="#dfe3ea" /><path d="M0 16q11 3 22-1v7H0z" fill="#2f9a2f" /><ellipse cx="11" cy="11.500" rx="6" ry="5" fill="#9daac5" stroke="#26366e" strokeWidth="1.300" /><circle cx="11" cy="11.500" r="2.200" fill="#26366e" /></g></svg>
);
const Marker = () => (
  <svg width="26" height="26" viewBox="0 0 26 26" fill={BLUE}><path d="M9.500 10.500 18 1.800q2-1.800 4 0l1.700 1.700q1.800 2 0 4L15.500 16.500zM8.300 11.500l6.200 6-2.500 2.700H9.200L6.300 17.500v-3.500zM4.500 18.500l3.700 3.500-2.500 2.500H1z" /></svg>
);
const TextFrame = () => (
  <svg width="28" height="28" viewBox="0 0 28 28" fill="none" stroke={BLUE}><path d="M7 4h14M7 24h14M4 7v14M24 7v14" strokeWidth="2" /><g strokeWidth="2.200"><path d="M2 2h4.500v4.500H2zM21.500 2H26v4.500h-4.500zM2 21.500h4.500V26H2zM21.500 21.500H26V26h-4.500z" /></g><path d="M10 20l4-11 4 11M11.300 16.500h5.400" strokeWidth="1.500" /></svg>
);
const SplitPage = () => (
  <svg width="24" height="28" viewBox="0 0 24 28" fill="none" stroke={BLUE} strokeWidth="2.200"><path d="M8.500 4H2v20h6.500M12 1v26" /><path d="M15.500 4h1.500M19 4h3M21.500 8v2.500M21.500 13v2.500M21.500 18v2.500M19 24h3M15.500 24H17" /></svg>
);
const Corners = () => (
  <svg width="18" height="18" viewBox="0 0 18 18" fill="none" stroke={BLUE} strokeWidth="2.800"><path d="M1.500 6V1.500H6M12 1.500h4.500V6M1.500 12v4.500H6M12 16.500h4.500V12" /></svg>
);
const ChainIcon = () => (
  <svg width="32" height="20" viewBox="0 0 32 20" fill="none" stroke="#a7ba26" strokeWidth="4"><path d="M14.500 2.200H9.800a7.800 7.800 0 0 0 0 15.600h4.700M17.500 2.200h4.700a7.800 7.800 0 0 1 0 15.600h-4.700" /><path d="M10.500 10h11" strokeWidth="3.500" /></svg>
);
const HueberFav = () => (
  <svg width="20" height="17" viewBox="0 0 20 17"><path d="M0 0h20v12H0z" fill="#d5112c" /><path d="M3 9.500h3M9 9h8" stroke="#fff" strokeWidth="1.500" strokeDasharray="2 1" /><path d="M5 14h3M10 14h2M15 14.500h3" stroke="#d5112c" strokeWidth="2" strokeDasharray="1.500 1" /></svg>
);
const HouseIcon = () => (
  <svg width="23" height="21" viewBox="0 0 23 21"><path d="M11.500 0l11.500 11h-3.300v10h-6v-7H9.300v7h-6V11H0z" fill="#616161" /></svg>
);

/* ---------- exercise data ---------- */

type Piece = { t: string; w: number } | { b: number; l?: number; r?: number; hand?: string };
const dialogue: { mark: string; mt: number; q: Piece[]; gap?: number; a: Piece[] }[] = [
  { mark: "a", mt: 8, q: [{ t: "Warum", w: 53 }, { b: 54, hand: "hast", r: 4.5 }, { t: "du deinen Mantel nicht", w: 167.5 }, { b: 172.5, r: 0.5 }, { t: "?", w: 7 }], a: [{ t: "Ich brauche ihn nicht. Es ist heute nicht kalt.", w: 320 }] },
  { mark: "b", mt: 7, q: [{ t: "Warum siehst du so müde aus?", w: 222 }], a: [{ t: "Ich", w: 22 }, { b: 94.5 }, { t: "gestern sehr lange", w: 131 }, { b: 173, r: 0.5 }, { t: ". Der Krimi war wirklich gut.", w: 206 }] },
  { mark: "c", mt: 7, gap: 1, q: [{ t: "Komm schnell, wir kommen zu spät.", w: 261.5 }], a: [{ t: "Auf keinen Fall, das Konzert", w: 202.5 }, { b: 94.5 }, { t: "sicher noch nicht", w: 123 }, { b: 173.5, r: 0.5 }, { t: ".", w: 4 }] },
  { mark: "d", mt: 7, q: [{ t: "Peters Zimmer sieht sehr schön aus.", w: 260 }], a: [{ t: "Ja, er", w: 35.5 }, { b: 94 }, { t: "es endlich", w: 72 }, { b: 173, r: 0.5 }, { t: ".", w: 4 }] },
  { mark: "e", mt: 7, q: [{ t: "Wo wart ihr am Samstagabend?", w: 228 }], a: [{ t: "Wir", w: 27 }, { b: 94.5, r: 0 }, { b: 173, l: 2.5, r: 0.5 }, { t: ", wir waren in der Disco.", w: 174.5 }] },
  { mark: "f", mt: 7, q: [{ t: "Antonia hat Fieber und liegt im Bett.", w: 263 }], a: [{ t: "Ja, sie", w: 41 }, { b: 94.5 }, { t: "gestern schon krank", w: 145.5 }, { b: 173, r: 0.5 }, { t: ".", w: 4 }] },
];
const Pieces = ({ list }: { list: Piece[] }) => (
  <>
    {list.map((p, i) =>
      "t" in p ? <Fit key={i} w={p.w}>{p.t}</Fit> : (
        <Blank key={i} $w={p.b} $l={p.l} $r={p.r}>{p.hand && <Hand><Fit w={33}>{p.hand}</Fit></Hand>}</Blank>
      )
    )}
  </>
);
const errors = [
  { mt: 23, l: "a", lt: <>Wann <Struck>hast</Struck> du gestern nach Hause gekommen?</>, lw: 334.5, r: "d", rt: "Herr Neumann hat eine E-Mail schreiben.", rw: 303 },
  { mt: 15, l: "b", lt: "Wir haben gestern fleißig lernen.", lw: 237, r: "e", rt: "Er hat eine Stunde lang wartet.", rw: 222 },
  { mt: 14, l: "c", lt: "Anton und Tine ist am Wochenende gewandert.", lw: 344, r: "f", rt: "Seid ihr gestern Tennis gespielt?", rw: 232.5 },
];
const verbs = [
  { l: "aufräumen", lw: 77.5, r: "ausgehen", rw: 67.5, hand: true },
  { l: "fernsehen", lw: 71, r: "anziehen", rw: 64.5 },
  { l: "anfangen", lw: 66.5, r: "aussehen", rw: 67.5 },
];

function Worksheet() {
  return (
    <Sheet>
      <Banner>
        <DashRule />
        <Chapter $w={91} $ml={32} $pad={50} $fill="#f0f6f5" $ink="#62b24c"><Fit w={27}>9</Fit></Chapter>
        <Chapter $w={52} $pad={11} $fill="#62b24c" $ink="#fff"><Fit w={30}>B</Fit></Chapter>
      </Banner>
      <Heading $mt={17}><Num>5</Num><Fit w={441.5}>Finden Sie in jedem Satz einen Fehler und korrigieren Sie ihn.</Fit></Heading>
      {errors.map((e) => (
        <Row key={e.l} $mt={e.mt}>
          <Half><Mark $w={19.5}>{e.l}</Mark><Fit w={e.lw}>{e.lt}</Fit></Half>
          <Mark $w={20.5}>{e.r}</Mark><Fit w={e.rw}>{e.rt}</Fit>
        </Row>
      ))}
      <Heading $mt={23}><Num>6</Num><Fit w={184}>Schreiben Sie das Perfekt.</Fit></Heading>
      {verbs.map((v, i) => (
        <Row key={v.l} $mt={i ? 0 : 7}>
          <Half><Mark $w={81}><Fit w={v.lw}>{v.l}</Fit></Mark><Blank $w={277}>{v.hand && <Mark $w={255}><Hand><Fit w={115}>hat aufgeräumt</Fit></Hand></Mark>}</Blank></Half>
          <Mark $w={81}><Fit w={v.rw}>{v.r}</Fit></Mark><Blank $w={277} />
        </Row>
      ))}
      <Heading $mt={21}><Num>7</Num><Fit w={295.5}>Ergänzen Sie die Verben aus 6 im Perfekt.</Fit></Heading>
      {dialogue.map((d) => (
        <React.Fragment key={d.mark}>
          <Row $mt={d.mt}><Mark $w={21.5}>{d.mark}</Mark><Bullet /><Pieces list={d.q} /></Row>
          <Row $mt={d.gap}><Mark $w={21.5} /><Bullet $sq /><Pieces list={d.a} /></Row>
        </React.Fragment>
      ))}

      <Pinned $x={204.5} $y={84}><Hand><Fit w={27}>bist</Fit></Hand></Pinned>
      <Note $x={402} $y={130}><Fit w={81}>gelernt</Fit></Note>
      <Note $x={266} $y={190}><Fit w={48}>sind</Fit></Note>
      <Note $x={818} $y={86}><Fit w={144}>geschrieben</Fit></Note>
      <Note $x={806} $y={137}><Fit w={101.5}>gewartet</Fit></Note>
      <Note $x={583} $y={191}><Fit w={56}>Habt</Fit></Note>
      <TextCaret $x={639} $y={196} />
      <Pinned $x={662} $y={225}>
        <svg width="10" height="20" viewBox="0 0 10 20"><path d="M1 1h3l1 1 1-1h3M1 19h3l1-1 1 1h3M5 2v16" fill="none" stroke="#222" strokeWidth="1.300" /></svg>
      </Pinned>
      <LinkBadge $x={53} $y={114}><ChainIcon /></LinkBadge>
      <LinkBadge $x={55} $y={282}><ChainIcon /></LinkBadge>
      <LinkBadge $x={56} $y={400}><ChainIcon /></LinkBadge>
    </Sheet>
  );
}

function SharedScreen() {
  return (
    <Share>
      <ShareTitle>
        <HueberFav /><Fit w={84}>HUEBER-App</Fit>
        <Controls>
          <svg width="12" height="12"><path d="M0 6.500h12" stroke="#222" strokeWidth="1.300" /></svg>
          <svg width="12" height="12"><path d="M.7.7h10.600v10.600H.7z" fill="none" stroke="#222" strokeWidth="1.300" /></svg>
          <svg width="12" height="12"><path d="M0 0l12 12M12 0 0 12" stroke="#222" strokeWidth="1.300" /></svg>
        </Controls>
      </ShareTitle>
      <AppHeader>
        <MenuCell><MdMenu size={31} /></MenuCell>
        <HomeTab><HouseIcon /><Fit w={106}>Startseite</Fit></HomeTab>
        <BookTab><Fit w={193}>Motive A2 Arbeitsbuch</Fit><svg width="15" height="15"><path d="M1.500 1.500l12 12M13.500 1.500l-12 12" stroke="#c8415c" strokeWidth="2" /></svg></BookTab>
        <Logo><Fit w={102}>Hueber</Fit></Logo>
      </AppHeader>
      <Tools>
        <Tool $w={48}><MdMoreVert size={28} /></Tool>
        <Tool $w={36} $l={35}><MdFindInPage size={28} /></Tool>
        <Tool $w={36} $l={4}><MdArrowUpward size={27} /></Tool>
        <Tool $w={36}><MdArrowDownward size={27} /></Tool>
        <Field $w={64} $l={4} $right>9</Field>
        <PageCount><Fit w={64}>(9 von 88)</Fit></PageCount>
        <Tool $w={28} $l={11} $edit><Marker /></Tool>
        <Tool $w={28} $l={29} $edit><MdComment size={28} /></Tool>
        <Tool $w={55} $l={16} $on $edit><MdTextFields size={28} /></Tool>
        <Tool $w={28} $l={16} $edit><TextFrame /></Tool>
        <Tool $w={28} $l={30} $edit><MdEdit size={28} /></Tool>
        <Tool $w={28} $l={29.5} $edit><MdVisibilityOff size={27} /></Tool>
        <Tool $w={28} $l={29.5} $edit><MdDeleteForever size={28} /></Tool>
        <Tool $w={28} $l={239}><SplitPage /></Tool>
        <Tool $w={36} $l={8}><MdZoomOut size={27} /></Tool>
        <Tool $w={36}><MdZoomIn size={27} /></Tool>
        <Field $w={176} $l={4}><Fit w={35}>110%</Fit></Field>
        <Tool $w={28} $l={10}><Corners /></Tool>
        <Palette>
          {["#000", "#0a1cff", "#268006", "#ffff00", "#f8a102", "#f80f00"].map((c) => <Swatch key={c} $c={c} />)}
        </Palette>
      </Tools>
      <Viewer>
        <Worksheet />
        <Scroll><Arrow /><Thumb /><Arrow $down /></Scroll>
      </Viewer>
    </Share>
  );
}

export default function App() {
  return (
    <Desktop>
      <Global />
      <TopBar>
        <TopLeft>
          <Fit w={68}>Activities</Fit>
          <AppMenu><Chromium s={16} /><Fit w={172}>Chromium Web Browser</Fit><Caret /></AppMenu>
        </TopLeft>
        <Fit w={77}>Fr  9:38 AM</Fit>
        <TopRight>
          <Tray><MdBluetooth size={22} /></Tray>
          <Tray $l={30}>
            <svg width="16" height="14" viewBox="0 0 16 14" fill="none" strokeWidth="2"><path d="M1 4.500c4-4 10-4 14 0" stroke="#8b887f" /><path d="M3.500 7.500c3-2.500 6-2.500 9 0M5.800 10c1.500-1 3-1 4.500 0" stroke="#dfdbd2" /><circle cx="8" cy="12.500" r="1.500" fill="#dfdbd2" /></svg>
          </Tray>
          <Tray $l={12}>
            <svg width="16" height="14" viewBox="0 0 16 14" fill="none" stroke="#dfdbd2" strokeWidth="1.400"><path d="M0 5h2l4-4v12L2 9H0z" fill="#dfdbd2" stroke="none" /><path d="M8 4.500q1.500 2.500 0 5M10.500 3q2.500 4 0 8M13 1.500q4 5.500 0 11" /></svg>
          </Tray>
          <Tray $l={15}>
            <svg width="12" height="16" viewBox="0 0 12 16" fill="none" stroke="#dfdbd2" strokeWidth="1.500"><path d="M1 3h3V1h4v2h3v12H1zM3.500 6.500h5M3.500 9h5M3.500 11.500h5" /></svg>
          </Tray>
          <Tray $l={12}><Caret as="div" /></Tray>
        </TopRight>
      </TopBar>
      <Body>
        <Dock>
          {dock.map((d, i) => (
            <DockItem key={i} $active={i === 0} $drop={d.drop}>
              {d.dots && <Dots>{Array.from({ length: d.dots }, (_, k) => <i key={k} />)}</Dots>}
              {d.icon}
            </DockItem>
          ))}
          <DockSpacer />
          <AppsGrid>{Array.from({ length: 9 }, (_, k) => <i key={k} />)}</AppsGrid>
        </Dock>
        <Browser>
          <TitleBar>
            <Fit w={248.5}>Meeting findet statt ... - Chromium</Fit>
            <WinButtons>
              <WinButton><svg width="8" height="8"><path d="M0 4h8" stroke="#33322e" strokeWidth="1.400" /></svg></WinButton>
              <WinButton><svg width="8" height="8"><path d="M.7 1h6.600v6H.7z" fill="none" stroke="#33322e" strokeWidth="1.400" /></svg></WinButton>
              <WinButton $close><svg width="8" height="8"><path d="M1 1l6 6M7 1 1 7" stroke="#5a1d0a" strokeWidth="1.500" /></svg></WinButton>
            </WinButtons>
          </TitleBar>
          <TabStrip>
            {tabs.map((t, i) => <Tab key={i} $w={i === 0 ? 49 : i < 3 ? 40 : 39} $pad={i === 0 ? 16 : 7}>{t}</Tab>)}
            <ActiveTab><span>/</span><MdClose size={14} /></ActiveTab>
            <Tab $w={39} $pad={6}><Translate /></Tab>
            <NewTab><MdAdd size={21} /></NewTab>
          </TabStrip>
          <Toolbar>
            <NavIcon><MdArrowBack size={19} /></NavIcon>
            <NavIcon $dim><MdArrowForward size={19} /></NavIcon>
            <NavIcon><MdRefresh size={21} /></NavIcon>
            <NavIcon><HomeOutline /></NavIcon>
            <Omnibox>
              <OmniIcon $w={16}><MdLock size={14} /></OmniIcon>
              <OmniIcon $w={9} />
              <b><Fit w={150.5}>unistuttgart.webex.com</Fit></b>
              <Fit w={1107.5}>/webappng/sites/unistuttgart/meeting/download/ce92d67595c94ba9be0cb4c7c21ae106_20200710T063000Z?MTID=m30942414e4d1be477113653036162165&amp;launchApp...</Fit>
              <OmniIcon $w={32} $l={9}><MdVideocam size={16} /></OmniIcon>
              <OmniIcon $w={32}><MdGTranslate size={15} /></OmniIcon>
              <OmniIcon $w={32}><MdStarBorder size={18} /></OmniIcon>
            </Omnibox>
            <NavIcon><FavBox $bg="#c70d0d" $round $f={`bold 7px/16px ${UI}`}>ABP</FavBox></NavIcon>
            <NavIcon><FavBox $bg="#9b9b9b" $round $f={`bold 11px/16px ${UI}`}>C</FavBox></NavIcon>
            <NavIcon><svg width="14" height="11" viewBox="0 0 14 11" fill="none" strokeWidth="2"><path d="M1 .5l4 9 2-6" stroke="#d8472a" /><path d="M5 .5l3 9 4.500-9" stroke="#f0a21e" /></svg></NavIcon>
            <NavIcon><WebexRing /></NavIcon>
            <NavIcon><FavBox $bg="#3fbf97" $round $f={`12px/16px ${UI}`}>G</FavBox></NavIcon>
            <NavIcon><Shamrock /></NavIcon>
            <NavIcon><svg width="16" height="16" viewBox="0 0 16 16"><path d="M4 2h7a3 3 0 0 1 3 3v2l-5 3v4.500L2.500 6q-1-4 1.500-4z" fill="none" stroke="#4289ea" strokeWidth="1.800" /></svg></NavIcon>
            <OmniIcon $w={13}><VLine $h={16} /></OmniIcon>
            <NavIcon><Avatar /></NavIcon>
            <NavIcon><MdMoreVert size={20} /></NavIcon>
          </Toolbar>
          <Bookmarks>
            {marks.map((m) => <Bookmark key={m.t} $w={m.p} $gap={m.i ? 8 : 9}>{m.i ?? <Folder />}<Fit w={m.w}>{m.t}</Fit></Bookmark>)}
            <More>»</More>
            <Bookmark $w={165}><VLine $h={16} $r={2} /><Folder /><Fit w={120}>Other bookmarks</Fit></Bookmark>
          </Bookmarks>
          <Meeting>
            <Side>
              <InfoButton>
                <svg width="19" height="19" viewBox="0 0 19 19" fill="none" stroke="#111" strokeWidth="1.500"><circle cx="9.500" cy="9.500" r="8.300" /><path d="M8 8h1.700v5M7.500 13.200h4.200M9.500 4.800v1.800" /></svg>
              </InfoButton>
            </Side>
            <Stage><SharedScreen /></Stage>
            <Pill><Fit w={382}>Anzeigen der Anwendung von Simone …</Fit></Pill>
            <Speaker>
              <svg width="17" height="14" viewBox="0 0 17 14" fill="none" stroke="#fff" strokeWidth="1.400"><path d="M.7 0v14M17 7H4M9 1.500 3.500 7 9 12.500" /></svg>
              <Fit w={259}>Es spricht: Simone Durina-Sasdi</Fit>
            </Speaker>
            <MicButton>
              <svg width="26" height="30" viewBox="0 0 26 30" fill="none" stroke="#f04b37" strokeWidth="1.500"><rect x="7" y="1" width="12" height="24" rx="6" /><path d="M13 25v4M8.500 29h9M25.500 1 .5 26" /></svg>
            </MicButton>
          </Meeting>
        </Browser>
      </Body>
    </Desktop>
  );
}
